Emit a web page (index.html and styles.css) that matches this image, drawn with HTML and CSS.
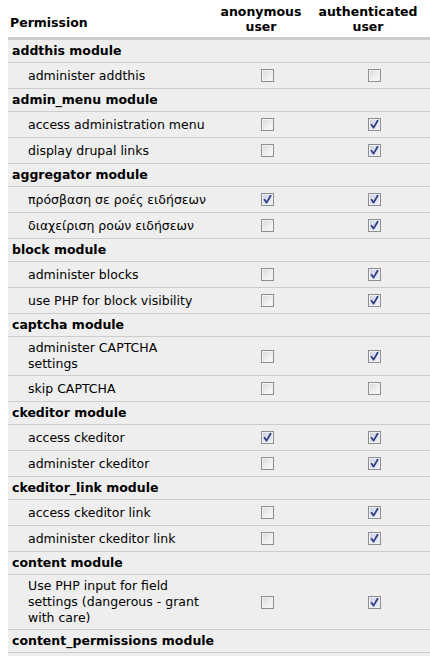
FILE: index.html
```html
<!DOCTYPE html>
<html>
<head>
<meta charset="utf-8">
<link rel="stylesheet" href="styles.css">
</head>
<body>
<table class="perms">
  <colgroup><col class="c-perm"><col class="c-anon"><col class="c-auth"></colgroup>
  <thead>
    <tr><th class="h-perm">Permission</th><th class="h-role">anonymous user</th><th class="h-role">authenticated user</th></tr>
  </thead>
  <tbody>
    <tr><td class="module" colspan="3">addthis module</td></tr>
    <tr><td class="perm">administer addthis</td><td class="cbx"><span class="cb"></span></td><td class="cbx"><span class="cb"></span></td></tr>
    <tr><td class="module" colspan="3">admin_menu module</td></tr>
    <tr><td class="perm">access administration menu</td><td class="cbx"><span class="cb"></span></td><td class="cbx"><span class="cb on"><svg viewBox="0 0 11 11"><path d="M2.5 5.8 L4.6 8.6 L8.6 1.8" /></svg></span></td></tr>
    <tr><td class="perm">display drupal links</td><td class="cbx"><span class="cb"></span></td><td class="cbx"><span class="cb on"><svg viewBox="0 0 11 11"><path d="M2.5 5.8 L4.6 8.6 L8.6 1.8" /></svg></span></td></tr>
    <tr><td class="module" colspan="3">aggregator module</td></tr>
    <tr><td class="perm">πρόσβαση σε ροές ειδήσεων</td><td class="cbx"><span class="cb on"><svg viewBox="0 0 11 11"><path d="M2.5 5.8 L4.6 8.6 L8.6 1.8" /></svg></span></td><td class="cbx"><span class="cb on"><svg viewBox="0 0 11 11"><path d="M2.5 5.8 L4.6 8.6 L8.6 1.8" /></svg></span></td></tr>
    <tr><td class="perm">διαχείριση ροών ειδήσεων</td><td class="cbx"><span class="cb"></span></td><td class="cbx"><span class="cb on"><svg viewBox="0 0 11 11"><path d="M2.5 5.8 L4.6 8.6 L8.6 1.8" /></svg></span></td></tr>
    <tr><td class="module" colspan="3">block module</td></tr>
    <tr><td class="perm">administer blocks</td><td class="cbx"><span class="cb"></span></td><td class="cbx"><span class="cb on"><svg viewBox="0 0 11 11"><path d="M2.5 5.8 L4.6 8.6 L8.6 1.8" /></svg></span></td></tr>
    <tr><td class="perm">use PHP for block visibility</td><td class="cbx"><span class="cb"></span></td><td class="cbx"><span class="cb on"><svg viewBox="0 0 11 11"><path d="M2.5 5.8 L4.6 8.6 L8.6 1.8" /></svg></span></td></tr>
    <tr><td class="module" colspan="3">captcha module</td></tr>
    <tr><td class="perm">administer CAPTCHA settings</td><td class="cbx"><span class="cb"></span></td><td class="cbx"><span class="cb on"><svg viewBox="0 0 11 11"><path d="M2.5 5.8 L4.6 8.6 L8.6 1.8" /></svg></span></td></tr>
    <tr><td class="perm">skip CAPTCHA</td><td class="cbx"><span class="cb"></span></td><td class="cbx"><span class="cb"></span></td></tr>
    <tr><td class="module" colspan="3">ckeditor module</td></tr>
    <tr><td class="perm">access ckeditor</td><td class="cbx"><span class="cb on"><svg viewBox="0 0 11 11"><path d="M2.5 5.8 L4.6 8.6 L8.6 1.8" /></svg></span></td><td class="cbx"><span class="cb on"><svg viewBox="0 0 11 11"><path d="M2.5 5.8 L4.6 8.6 L8.6 1.8" /></svg></span></td></tr>
    <tr><td class="perm">administer ckeditor</td><td class="cbx"><span class="cb"></span></td><td class="cbx"><span class="cb on"><svg viewBox="0 0 11 11"><path d="M2.5 5.8 L4.6 8.6 L8.6 1.8" /></svg></span></td></tr>
    <tr><td class="module" colspan="3">ckeditor_link module</td></tr>
    <tr><td class="perm">access ckeditor link</td><td class="cbx"><span class="cb"></span></td><td class="cbx"><span class="cb on"><svg viewBox="0 0 11 11"><path d="M2.5 5.8 L4.6 8.6 L8.6 1.8" /></svg></span></td></tr>
    <tr><td class="perm">administer ckeditor link</td><td class="cbx"><span class="cb"></span></td><td class="cbx"><span class="cb on"><svg viewBox="0 0 11 11"><path d="M2.5 5.8 L4.6 8.6 L8.6 1.8" /></svg></span></td></tr>
    <tr><td class="module" colspan="3">content module</td></tr>
    <tr><td class="perm">Use PHP input for field settings (dangerous - grant with care)</td><td class="cbx"><span class="cb"></span></td><td class="cbx"><span class="cb on"><svg viewBox="0 0 11 11"><path d="M2.5 5.8 L4.6 8.6 L8.6 1.8" /></svg></span></td></tr>
    <tr><td class="module" colspan="3">content_permissions module</td></tr>
    <tr><td class="perm"></td><td class="cbx"><span class="cb"></span></td><td class="cbx"><span class="cb"></span></td></tr>
  </tbody>
</table>
</body>
</html>
```

FILE: styles.css
```css
html, body {
  background: #fff;
}
body {
  margin: 0 0 0 8px;
  font-family: "DejaVu Sans", Verdana, sans-serif;
  font-size: 12.5px;
  line-height: 16px;
  color: #000;
}
.perms {
  width: 422px;
  border-collapse: collapse;
  table-layout: fixed;
}
.c-perm { width: 208px; }
.c-anon { width: 90px; }
.c-auth { width: 124px; }

.perms th {
  font-weight: bold;
  text-align: center;
  vertical-align: bottom;
  padding: 4px 2px 3px 2px;
  border-bottom: 3px solid #cccccc;
  line-height: 15px;
}
.perms th.h-perm {
  text-align: left;
  padding-bottom: 7px;
}
.perms td {
  background: #eeeeee;
  border-bottom: 1px solid #cccccc;
  padding: 3px 6px;
  vertical-align: middle;
}
.perms td.module {
  font-weight: bold;
  padding-left: 4px;
}
.perms td.perm {
  padding-left: 20px;
}
.perms td.cbx {
  text-align: center;
  padding-left: 18px;
  padding-right: 6px;
}
.cb {
  display: block;
  box-sizing: border-box;
  width: 13px;
  height: 13px;
  margin: 3px auto;
  border: 1px solid #8f8f8f;
  background: linear-gradient(135deg, #d6d6d6 0%, #ececec 50%, #fbfbfb 100%);
  box-shadow: inset 0 0 0 1px #f2f2f2;
}
.cb.on {
  background: linear-gradient(135deg, #c9cfe0 0%, #dfe3ee 50%, #f2f4f9 100%);
  box-shadow: inset 0 0 0 1px #eef0f6;
}
.cb svg {
  display: block;
  width: 11px;
  height: 11px;
}
.cb svg path {
  fill: none;
  stroke: #2f3f86;
  stroke-width: 1.8;
  stroke-linecap: round;
  stroke-linejoin: round;
}
```
